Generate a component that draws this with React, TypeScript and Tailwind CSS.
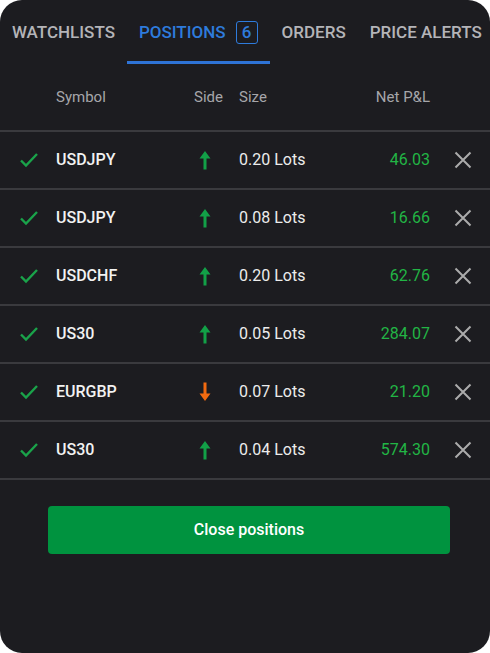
import React from 'react';

type Position = {
    symbol: string;
    side: 'buy' | 'sell';
    size: string;
    pnl: string;
};

const positions: Position[] = [
    { symbol: 'USDJPY', side: 'buy', size: '0.20 Lots', pnl: '46.03' },
    { symbol: 'USDJPY', side: 'buy', size: '0.08 Lots', pnl: '16.66' },
    { symbol: 'USDCHF', side: 'buy', size: '0.20 Lots', pnl: '62.76' },
    { symbol: 'US30', side: 'buy', size: '0.05 Lots', pnl: '284.07' },
    { symbol: 'EURGBP', side: 'sell', size: '0.07 Lots', pnl: '21.20' },
    { symbol: 'US30', side: 'buy', size: '0.04 Lots', pnl: '574.30' },
];

const Check = () => (
    <svg width="20" height="16" viewBox="0 0 20 16" fill="none">
        <path d="M2 8.5l5 5L18 2" stroke="#1aa34a" strokeWidth="2.4" />
    </svg>
);

const Arrow: React.FC<{ up: boolean }> = ({ up }) => (
    <svg
        width="12"
        height="20"
        viewBox="0 0 12 20"
        className={up ? '' : 'rotate-180'}
    >
        <path d="M6 1L11.5 8.5H7.5V19.5H4.5V8.5H0.5z" fill={up ? '#12a047' : '#f26a10'} />
    </svg>
);

const Cross = () => (
    <svg width="18" height="18" viewBox="0 0 18 18" fill="none">
        <path d="M1.5 1.5l15 15M16.5 1.5l-15 15" stroke="#ababab" strokeWidth="2" />
    </svg>
);

const Tab: React.FC<{ label: string; active?: boolean; badge?: string }> = ({ label, active, badge }) => (
    <div className="relative flex items-center h-full px-3">
        <span className={active ? 'text-[#2e7bdc]' : 'text-[#b4b4b8]'}>{label}</span>
        {badge && (
            <span className="ml-[10px] w-[22px] h-[23px] flex items-center justify-center border-[1.5px] border-[#2e7bdc] rounded-[3px] text-[#2e7bdc]">
                {badge}
            </span>
        )}
        {active && <div className="absolute left-0 right-0 bottom-[1px] h-[3px] bg-[#2e73d6]" />}
    </div>
);

const App: React.FC = () => {
    return (
        <div className="w-[490px] h-[653px] bg-white" style={{ fontFamily: 'Roboto, sans-serif' }}>
            <div className="w-full h-full bg-[#1c1c20] rounded-[22px] overflow-hidden flex flex-col">
                <div className="flex h-[65px] text-[17px] font-medium whitespace-nowrap">
                    <Tab label="WATCHLISTS" />
                    <Tab label="POSITIONS" active badge="6" />
                    <Tab label="ORDERS" />
                    <Tab label="PRICE ALERTS" />
                </div>

                <div className="flex items-center h-[67px] text-[15px] text-[#a6a6aa] border-b-2 border-[#3a3a3e]">
                    <div className="w-[56px]" />
                    <div className="w-[128px]">Symbol</div>
                    <div className="w-[39px] text-right">Side</div>
                    <div className="ml-[16px] w-[100px]">Size</div>
                    <div className="w-[91px] text-right">Net P&amp;L</div>
                </div>

                {positions.map((p, i) => (
                    <div
                        key={i}
                        className="flex items-center h-[58px] text-[16px] border-b-2 border-[#3a3a3e]"
                    >
                        <div className="w-[56px] pl-[19px] flex items-center">
                            <Check />
                        </div>
                        <div className="w-[128px] font-medium text-[#f2f2f2]">{p.symbol}</div>
                        <div className="w-[39px] flex justify-end pr-[12px]">
                            <Arrow up={p.side === 'buy'} />
                        </div>
                        <div className="ml-[16px] w-[100px] text-[#ececec]">{p.size}</div>
                        <div className="w-[91px] text-right text-[#22b545]">{p.pnl}</div>
                        <div className="w-[60px] flex justify-center pl-[6px]">
                            <Cross />
                        </div>
                    </div>
                ))}

                <div className="px-[48px] pt-[26px]">
                    <button className="w-[402px] h-[48px] bg-[#00933f] rounded-[4px] text-white text-[16px] font-medium">
                        Close positions
                    </button>
                </div>
            </div>
        </div>
    );
};

export default App;
